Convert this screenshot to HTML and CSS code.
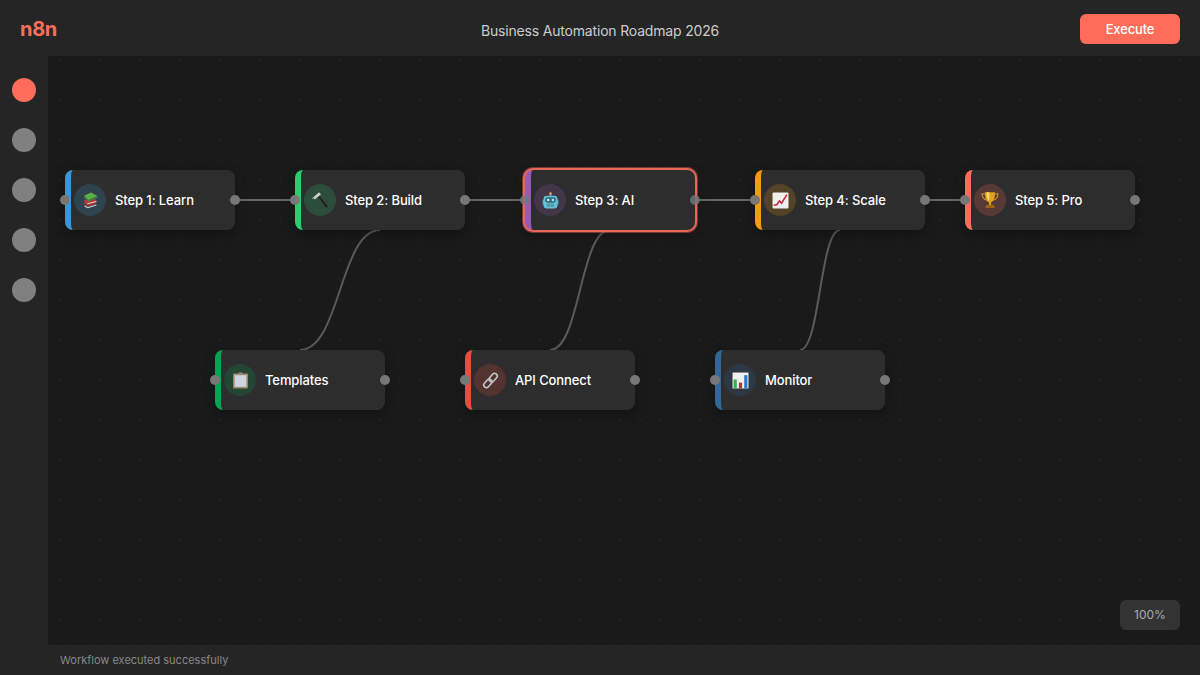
FILE: index.html
```html
<!DOCTYPE html>
<html lang="en">
<head>
<meta charset="utf-8">
<title>Business Automation Roadmap 2026</title>
<link rel="stylesheet" href="styles.css">
</head>
<body>
<div class="app">
  <header class="topbar">
    <div class="logo">n8n</div>
    <div class="title">Business Automation Roadmap 2026</div>
    <button class="execute">Execute</button>
  </header>
  <aside class="sidebar">
    <span class="tool tool-active"></span>
    <span class="tool"></span>
    <span class="tool"></span>
    <span class="tool"></span>
    <span class="tool"></span>
  </aside>
  <main class="canvas">
    <svg class="wires" width="1152" height="589" viewBox="48 56 1152 589" fill="none">
      <path d="M235 200H295"/>
      <path d="M465 200H525"/>
      <path d="M695 200H755"/>
      <path d="M925 200H965"/>
      <path class="wire-curve" d="M380 230C340 230 340 350 300 350"/>
      <path class="wire-curve" d="M610 230C580 230 580 350 550 350"/>
      <path class="wire-curve" d="M840 230C820 230 820 350 800 350"/>
    </svg>

    <div class="node n-learn">
      <span class="port port-in"></span>
      <span class="icon">
        <svg viewBox="0 0 16 16" width="17" height="17">
          <path d="M2 11.500l8.500-1.500 3 1.500-8 2.500z" fill="#8a3a3a"/>
          <path d="M2.500 12.500l3 1.800 8-2.500v1l-8 2.500-3-1.500z" fill="#d8d8e0"/>
          <path d="M2 7.500l9-1.800 2.500 1.800v2.500l-8.500 2-3-1.500z" fill="#b8323c"/>
          <path d="M5 10.500l8.500-2v1l-8.500 2z" fill="#e8dcc8"/>
          <path d="M2 3.500l6.500-3 6 3.300-8.500 3.700z" fill="#5cb04a"/>
          <path d="M2 3.500l4 4 8.500-3.700v1.500l-8.500 3.700-4-3.500z" fill="#2f8a3c"/>
        </svg>
      </span>
      <span class="label">Step 1: Learn</span>
      <span class="port port-out"></span>
    </div>

    <div class="node n-build">
      <span class="port port-in"></span>
      <span class="icon">
        <svg viewBox="0 0 18 18" width="18" height="18">
          <path d="M6.800 5.500l1.200-1 8.800 11-1.400 1.200z" fill="#1c1c1c"/>
          <path d="M1 7.500L7.800 1.500l1.200.6.900 1.300-6.200 5-.9-1.500-1.100 1.200z" fill="#cfcfcf"/>
        </svg>
      </span>
      <span class="label">Step 2: Build</span>
      <span class="port port-out"></span>
    </div>

    <div class="node n-ai node-selected">
      <span class="port port-in"></span>
      <span class="icon">
        <svg viewBox="0 0 16 16" width="17" height="17">
          <circle cx="8" cy="1.500" r="1.300" fill="#e8a050"/>
          <rect x="7.400" y="2" width="1.200" height="2" fill="#9aa8b0"/>
          <rect x="0.500" y="7" width="2" height="5" rx="1" fill="#5ba8b8"/>
          <rect x="13.500" y="7" width="2" height="5" rx="1" fill="#5ba8b8"/>
          <rect x="1.500" y="3.500" width="13" height="12" rx="3" fill="#62c4d8"/>
          <rect x="3" y="5" width="10" height="5" rx="2" fill="#3a6a80"/>
          <circle cx="5.800" cy="7.500" r="1.200" fill="#a8f0f8"/>
          <circle cx="10.200" cy="7.500" r="1.200" fill="#a8f0f8"/>
          <path d="M5 11h6v3H5z" fill="#3a8298"/>
          <path d="M6.500 11v3M8 11v3M9.500 11v3" stroke="#a8d8e0" stroke-width=".5"/>
        </svg>
      </span>
      <span class="label">Step 3: AI</span>
      <span class="port port-out"></span>
    </div>

    <div class="node n-scale">
      <span class="port port-in"></span>
      <span class="icon">
        <svg viewBox="0 0 16 16" width="17" height="17">
          <rect x="0.500" y="0.500" width="15" height="15" rx="1" fill="#f2f0ee"/>
          <path d="M1.500 12.500l3-.5 2.500-3.500 2 2L14 2.500" fill="none" stroke="#c8283c" stroke-width="1.500"/>
        </svg>
      </span>
      <span class="label">Step 4: Scale</span>
      <span class="port port-out"></span>
    </div>

    <div class="node n-pro">
      <span class="port port-in"></span>
      <span class="icon">
        <svg viewBox="0 0 16 16" width="18" height="18">
          <path d="M3.500 2.500H1c0 3.500 1.500 5 4 5.500M12.500 2.500H15c0 3.500-1.500 5-4 5.500" fill="none" stroke="#c88a18" stroke-width="1.200"/>
          <path d="M3.500 1h9c0 5-1 8-3.500 9v2.500H7V10C4.500 9 3.500 6 3.500 1z" fill="#e0a020"/>
          <path d="M5 1h2.500c0 3.500 0 6-.5 8C5.500 7.500 5 5 5 1z" fill="#f8d860"/>
          <path d="M4.500 12.500h7l.8 2.500H3.700z" fill="#9a6410"/>
        </svg>
      </span>
      <span class="label">Step 5: Pro</span>
      <span class="port port-out"></span>
    </div>

    <div class="node n-templates">
      <span class="port port-in"></span>
      <span class="icon">
        <svg viewBox="0 0 16 16" width="17" height="17">
          <rect x="1" y="1.500" width="14" height="14" rx="1" fill="#a08c6c"/>
          <rect x="2.500" y="3" width="11" height="11" fill="#cdd6e0"/>
          <rect x="6" y="0.500" width="4" height="2" rx=".5" fill="#8f8a7c"/>
        </svg>
      </span>
      <span class="label">Templates</span>
      <span class="port port-out"></span>
    </div>

    <div class="node n-api">
      <span class="port port-in"></span>
      <span class="icon">
        <svg viewBox="0 0 16 16" width="17" height="17" fill="none" stroke="#c4c8cc" stroke-width="1.500">
          <rect x="8" y="0.800" width="5" height="9" rx="2.500" transform="rotate(42 10.500 5.300)"/>
          <rect x="3" y="6.200" width="5" height="9" rx="2.500" transform="rotate(42 5.500 10.700)"/>
        </svg>
      </span>
      <span class="label">API Connect</span>
      <span class="port port-out"></span>
    </div>

    <div class="node n-monitor">
      <span class="port port-in"></span>
      <span class="icon">
        <svg viewBox="0 0 16 16" width="17" height="17">
          <rect x="0.500" y="0.500" width="15" height="15" fill="#f0f0f0"/>
          <rect x="1.500" y="7" width="3" height="8.500" fill="#38b048"/>
          <rect x="6.500" y="10" width="3" height="5.500" fill="#c82830"/>
          <rect x="11.500" y="3" width="3" height="12.500" fill="#2878c8"/>
        </svg>
      </span>
      <span class="label">Monitor</span>
      <span class="port port-out"></span>
    </div>

    <div class="zoom">100%</div>
  </main>
  <footer class="status">Workflow executed successfully</footer>
</div>
</body>
</html>
```

FILE: styles.css
```css
* { box-sizing: border-box; }

html, body {
  margin: 0;
  height: 100%;
  overflow: hidden;
  background: #1a1a1a;
  font-family: Inter, "Liberation Sans", sans-serif;
}

.app {
  display: grid;
  grid-template-columns: 48px 1fr;
  grid-template-rows: 56px 1fr 30px;
  width: 1200px;
  height: 675px;
}

.topbar {
  grid-column: 1 / -1;
  display: flex;
  align-items: center;
  justify-content: space-between;
  padding: 2px 20px 0;
  background: #252525;
  position: relative;
}

.logo {
  font-size: 20px;
  font-weight: 700;
  letter-spacing: -.3px;
  color: #ff6d5a;
}

.title {
  position: absolute;
  left: 0;
  right: 0;
  top: 22px;
  text-align: center;
  font-size: 14px;
  line-height: 18px;
  letter-spacing: -.18px;
  color: #cccccc;
  pointer-events: none;
}

.execute {
  width: 100px;
  height: 30px;
  padding: 0;
  border: 0;
  border-radius: 6px;
  background: #ff6d5a;
  color: #ffffff;
  font: 500 13px Inter, "Liberation Sans", sans-serif;
  letter-spacing: -.15px;
}

.sidebar {
  grid-row: 2 / 4;
  display: flex;
  flex-direction: column;
  align-items: center;
  gap: 26px;
  padding-top: 22px;
  background: #252525;
}

.tool {
  width: 24px;
  height: 24px;
  border-radius: 50%;
  background: #808080;
}

.tool-active { background: #ff6d5a; }

.canvas {
  position: relative;
  background-color: #1a1a1a;
  background-image: radial-gradient(circle at 1px 1px, #232323 1px, transparent 1px);
  background-size: 20px 20px;
  background-position: 11px 3px;
}

.wires {
  position: absolute;
  left: 0;
  top: 0;
}

.wires path {
  stroke: #666666;
  stroke-width: 2;
}

.wires .wire-curve { stroke: #5a5a5a; }

.node {
  position: absolute;
  display: flex;
  align-items: center;
  gap: 9px;
  width: 170px;
  height: 60px;
  padding-left: 3px;
  border-left: 6px solid var(--accent);
  border-radius: 8px;
  background: #2d2d2d;
  box-shadow: 0 4px 12px rgba(0, 0, 0, .3);
}

.node-selected {
  box-shadow: 0 0 0 2px #e8665a, 0 0 0 3px rgba(232, 102, 90, .45), 0 4px 12px rgba(0, 0, 0, .3);
}

.n-learn { left: 17px; top: 114px; --accent: #3498db; --tint: rgba(52, 152, 219, .2); }
.n-build { left: 247px; top: 114px; --accent: #2ecc71; --tint: rgba(46, 204, 113, .2); }
.n-ai { left: 477px; top: 114px; --accent: #9b59b6; --tint: rgba(155, 89, 182, .2); }
.n-scale { left: 707px; top: 114px; --accent: #f39c12; --tint: rgba(243, 156, 18, .2); }
.n-pro { left: 917px; top: 114px; --accent: #ff6d5a; --tint: rgba(255, 109, 90, .2); }
.n-templates { left: 167px; top: 294px; --accent: #00a651; --tint: rgba(0, 166, 81, .2); }
.n-api { left: 417px; top: 294px; --accent: #e74c3c; --tint: rgba(231, 76, 60, .2); }
.n-monitor { left: 667px; top: 294px; --accent: #336699; --tint: rgba(51, 102, 153, .2); }

.icon {
  display: flex;
  align-items: center;
  justify-content: center;
  flex: none;
  width: 32px;
  height: 32px;
  border-radius: 50%;
  background: var(--tint);
}

.label {
  font-size: 13px;
  font-weight: 450;
  letter-spacing: -.1px;
  color: #ffffff;
  white-space: nowrap;
}

.port {
  position: absolute;
  top: 50%;
  width: 10px;
  height: 10px;
  margin-top: -5px;
  border-radius: 50%;
  background: #777777;
}

.port-in { left: -11px; }
.port-out { right: -5px; }

.node-selected .port { opacity: .8; }

.zoom {
  position: absolute;
  right: 20px;
  bottom: 15px;
  width: 60px;
  height: 30px;
  border-radius: 6px;
  background: #333333;
  color: #aaaaaa;
  font-size: 12px;
  line-height: 30px;
  text-align: center;
}

.status {
  display: flex;
  align-items: center;
  padding-left: 12px;
  background: #252525;
  color: #888888;
  font-size: 11px;
}
```
